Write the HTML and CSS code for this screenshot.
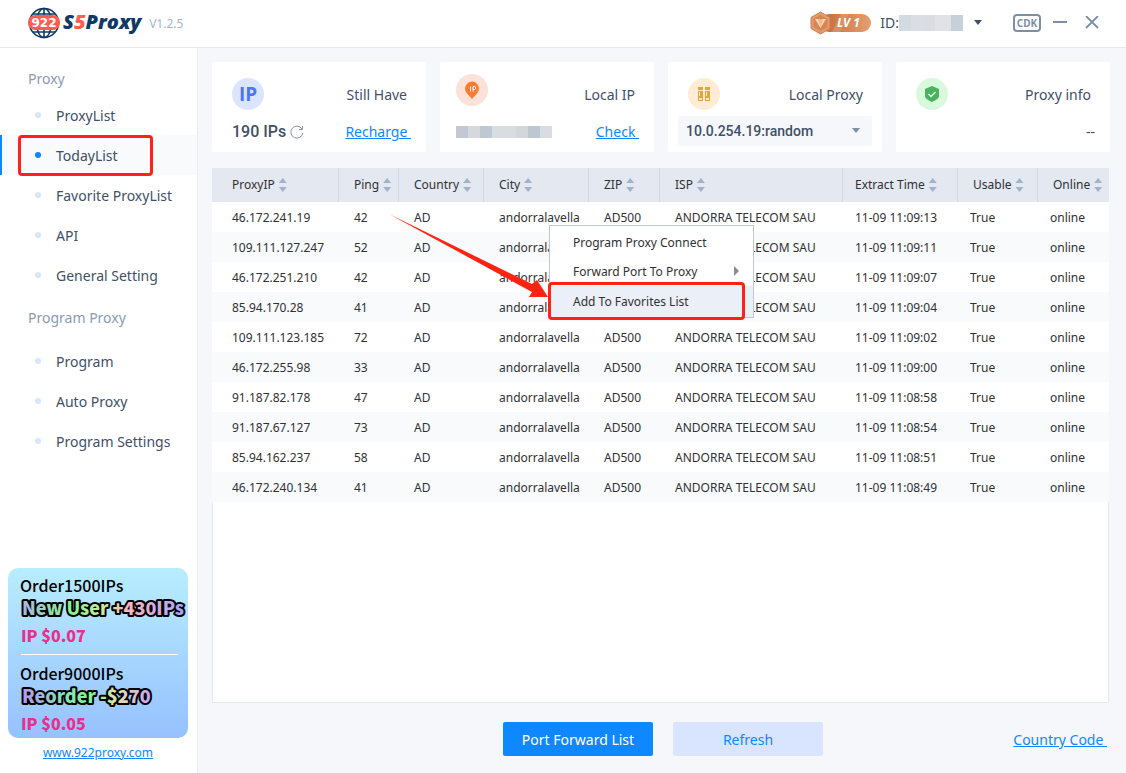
FILE: index.html
```html
<!DOCTYPE html>
<html lang="en">
<head>
  <meta charset="UTF-8" />
  <meta name="viewport" content="width=device-width, initial-scale=1.0" />
  <title>922 S5Proxy</title>
  <link rel="stylesheet" href="styles.css">
</head>
<body>
  <header class="topbar">
    <div class="brand">
      <svg class="globe" width="32" height="32" viewBox="0 0 32 32">
        <g fill="none" stroke="#0f3a66" stroke-width="1.6">
          <circle cx="16" cy="16" r="14.5" />
          <ellipse cx="16" cy="16" rx="7.5" ry="14.5" />
          <path d="M16 1.500v29M5 7h22M5 25h22" />
        </g>
        <rect x="0" y="8" width="32" height="15" rx="7" fill="#ff5d4f" />
        <text x="16" y="20" text-anchor="middle" class="globe-text">922</text>
      </svg>
      <h1 class="brand-name">S<span>5</span>Proxy</h1>
      <span class="version">V1.2.5</span>
    </div>
    <div class="account">
      <svg class="level" width="62" height="24" viewBox="0 0 62 24">
        <defs>
          <linearGradient id="lv" x1="0" x2="1">
            <stop offset="0" stop-color="#c06a3c" />
            <stop offset="1" stop-color="#e59f6e" />
          </linearGradient>
        </defs>
        <rect x="10" y="3" width="51" height="18" rx="9" fill="url(#lv)" />
        <path d="M31 3h8l-9 18h-8z" fill="#e0a37a" opacity=".5" />
        <path d="M10.500 1l9.500 5.500v11l-9.500 5.500-9.500-5.500v-11z" fill="#e39a6c" stroke="#cf7f51" />
        <path d="M10.500 4l7 4v8l-7 4-7-4v-8z" fill="#d58654" />
        <path d="M5 8h11l-5.500 9z" fill="#ffd9b5" />
        <path d="M8 8h5l-2.500 9z" fill="#f4b98a" />
        <text x="27" y="16" class="level-text">LV 1</text>
      </svg>
      <span class="user-id">ID:<i class="mask mask-id"></i></span>
      <button class="icon-btn caret-btn" aria-label="Account menu"><span class="caret"></span></button>
      <button class="cdk">CDK</button>
      <button class="icon-btn" aria-label="Minimize">
        <svg width="14" height="14" viewBox="0 0 14 14" stroke="#7c8fa6" stroke-width="2"><path d="M0 6h14" /></svg>
      </button>
      <button class="icon-btn close" aria-label="Close">
        <svg width="14" height="14" viewBox="0 0 14 14" stroke="#7c8fa6" stroke-width="1.8"><path d="M1 0l12 12M13 0L1 12" /></svg>
      </button>
    </div>
  </header>

  <div class="layout">
    <aside class="sidebar">
      <nav>
        <h2>Proxy</h2>
        <ul>
          <li><a href="#">ProxyList</a></li>
          <li class="active"><a href="#">TodayList</a><span class="mark"></span></li>
          <li><a href="#">Favorite ProxyList</a></li>
          <li><a href="#">API</a></li>
          <li><a href="#">General Setting</a></li>
        </ul>
        <h2>Program Proxy</h2>
        <ul>
          <li><a href="#">Program</a></li>
          <li><a href="#">Auto Proxy</a></li>
          <li><a href="#">Program Settings</a></li>
        </ul>
      </nav>
      <div class="promo-wrap">
        <div class="promo">
          <p class="order">Order1500IPs</p>
          <svg class="offer" width="166" height="26" viewBox="0 0 166 26">
            <defs>
              <linearGradient id="rainbow" x1="0" x2="1">
                <stop offset="0" stop-color="#a9b6e8" />
                <stop offset=".3" stop-color="#86f58c" />
                <stop offset=".5" stop-color="#c4ee9c" />
                <stop offset=".65" stop-color="#ffb3bd" />
                <stop offset="1" stop-color="#a8a4ff" />
              </linearGradient>
              <linearGradient id="rainbow2" x1="0" x2="1">
                <stop offset="0" stop-color="#b693f5" />
                <stop offset=".35" stop-color="#84e6b4" />
                <stop offset=".55" stop-color="#86f58c" />
                <stop offset=".75" stop-color="#e8dfae" />
                <stop offset="1" stop-color="#c9a0ff" />
              </linearGradient>
            </defs>
            <text x="2" y="20" fill="url(#rainbow)">New User +430IPs</text>
          </svg>
          <p class="price">IP $0.07</p>
          <hr>
          <p class="order">Order9000IPs</p>
          <svg class="offer" width="166" height="26" viewBox="0 0 166 26">
            <text x="2" y="20" fill="url(#rainbow2)">Reorder -$270</text>
          </svg>
          <p class="price">IP $0.05</p>
        </div>
        <a class="site" href="#">www.922proxy.com</a>
      </div>
    </aside>

    <main>
      <section class="cards">
        <div class="card">
          <div class="card-row">
            <svg width="32" height="32" viewBox="0 0 32 32">
              <circle cx="16" cy="16" r="16" fill="#dbe5ff" />
              <text x="16" y="23" text-anchor="middle" class="ip-text">IP</text>
            </svg>
            <h3>Still Have</h3>
          </div>
          <div class="card-row">
            <span class="count">190 IPs
              <button class="icon-btn" aria-label="Reload">
                <svg width="14" height="14" viewBox="0 0 14 14" fill="none" stroke="#8593a5"><path d="M12 4a6 6 0 1 0 .8 4M12.500 1v3.500H9" /></svg>
              </button>
            </span>
            <a href="#">Recharge&nbsp;</a>
          </div>
        </div>
        <div class="card card-local">
          <div class="card-row">
            <svg class="pin" width="32" height="32" viewBox="0 0 32 32">
              <circle cx="16" cy="16" r="16" fill="#fae2d8" />
              <path d="M16 25l-5-5.500a7 7 0 1 1 10 0z" fill="#ff7a33" />
              <path d="M14.500 12.500v5M17 17.500v-5h1.200a1.300 1.300 0 0 1 0 3H17" fill="none" stroke="#fff" />
            </svg>
            <h3>Local IP</h3>
          </div>
          <div class="card-row">
            <i class="mask mask-ip"></i>
            <a href="#">Check&nbsp;</a>
          </div>
        </div>
        <div class="card">
          <div class="card-row">
            <svg width="32" height="32" viewBox="0 0 32 32">
              <circle cx="16" cy="16" r="16" fill="#ffecd2" />
              <path d="M10 9h5v3h-5zM17 9h5v3h-5zM10 13h5v10h-5zM17 13h5v10h-5z" fill="#e2a73c" />
              <path d="M11 14h1v4h-1zM18 14h1v4h-1zM11 20h3v2h-3zM18 20h3v2h-3z" fill="#ffecd2" />
            </svg>
            <h3>Local Proxy</h3>
          </div>
          <div class="select">
            <select aria-label="Local proxy">
              <option>10.0.254.19:random</option>
            </select>
          </div>
        </div>
        <div class="card">
          <div class="card-row">
            <svg width="32" height="32" viewBox="0 0 32 32">
              <circle cx="16" cy="16" r="16" fill="#d9f9dc" />
              <path d="M16 8l7 3v7c0 3-4 4.500-7 6-3-1.500-7-3-7-6v-7z" fill="#4bb25f" />
              <path d="M12.500 16l2.500 2.500 4.500-4.500" fill="none" stroke="#e9fbe9" stroke-width="1.400" />
            </svg>
            <h3>Proxy info</h3>
          </div>
          <div class="card-row none">--</div>
        </div>
      </section>

      <section class="list">
        <table>
          <colgroup>
            <col class="c-ip"><col class="c-ping"><col class="c-country"><col class="c-city"><col class="c-zip"><col class="c-isp"><col class="c-time"><col class="c-usable"><col class="c-online">
          </colgroup>
          <thead>
            <tr>
              <th><button>ProxyIP</button></th>
              <th><button>Ping</button></th>
              <th><button>Country</button></th>
              <th><button>City</button></th>
              <th><button>ZIP</button></th>
              <th><button>ISP</button></th>
              <th><button>Extract Time</button></th>
              <th><button>Usable</button></th>
              <th><button>Online</button></th>
            </tr>
          </thead>
          <tbody>
            <tr><td>46.172.241.19</td><td>42</td><td>AD</td><td>andorralavella</td><td>AD500</td><td>ANDORRA TELECOM SAU</td><td>11-09 11:09:13</td><td>True</td><td>online</td></tr>
            <tr><td>109.111.127.247</td><td>52</td><td>AD</td><td>andorralavella</td><td>AD500</td><td>ANDORRA TELECOM SAU</td><td>11-09 11:09:11</td><td>True</td><td>online</td></tr>
            <tr><td>46.172.251.210</td><td>42</td><td>AD</td><td>andorralavella</td><td>AD500</td><td>ANDORRA TELECOM SAU</td><td>11-09 11:09:07</td><td>True</td><td>online</td></tr>
            <tr><td>85.94.170.28</td><td>41</td><td>AD</td><td>andorralavella</td><td>AD500</td><td>ANDORRA TELECOM SAU</td><td>11-09 11:09:04</td><td>True</td><td>online</td></tr>
            <tr><td>109.111.123.185</td><td>72</td><td>AD</td><td>andorralavella</td><td>AD500</td><td>ANDORRA TELECOM SAU</td><td>11-09 11:09:02</td><td>True</td><td>online</td></tr>
            <tr><td>46.172.255.98</td><td>33</td><td>AD</td><td>andorralavella</td><td>AD500</td><td>ANDORRA TELECOM SAU</td><td>11-09 11:09:00</td><td>True</td><td>online</td></tr>
            <tr><td>91.187.82.178</td><td>47</td><td>AD</td><td>andorralavella</td><td>AD500</td><td>ANDORRA TELECOM SAU</td><td>11-09 11:08:58</td><td>True</td><td>online</td></tr>
            <tr><td>91.187.67.127</td><td>73</td><td>AD</td><td>andorralavella</td><td>AD500</td><td>ANDORRA TELECOM SAU</td><td>11-09 11:08:54</td><td>True</td><td>online</td></tr>
            <tr><td>85.94.162.237</td><td>58</td><td>AD</td><td>andorralavella</td><td>AD500</td><td>ANDORRA TELECOM SAU</td><td>11-09 11:08:51</td><td>True</td><td>online</td></tr>
            <tr><td>46.172.240.134</td><td>41</td><td>AD</td><td>andorralavella</td><td>AD500</td><td>ANDORRA TELECOM SAU</td><td>11-09 11:08:49</td><td>True</td><td>online</td></tr>
          </tbody>
        </table>

        <div class="menu">
          <button>Program Proxy Connect</button>
          <button class="sub">Forward Port To Proxy</button>
          <button class="selected">Add To Favorites List</button>
          <span class="mark"></span>
        </div>
        <svg class="arrow" width="160" height="86" viewBox="0 0 160 86">
          <path d="M0 0l143 70 5-4 11 17-19 0 3-5z" fill="#ff2312" />
        </svg>
      </section>

      <footer class="actions">
        <button class="btn primary">Port Forward List</button>
        <button class="btn">Refresh</button>
        <a href="#">Country Code&nbsp;</a>
      </footer>
    </main>
  </div>
</body>
</html>
```
FILE: styles.css
```css
* {
  box-sizing: border-box;
}

body {
  margin: 0;
  min-height: 100vh;
  display: flex;
  flex-direction: column;
  font-family: "Noto Sans", "Open Sans", sans-serif;
  font-size: 14px;
  line-height: 20px;
  color: #3f5068;
  background-color: #f6f7fb;
}

h1, h2, h3, p, ul {
  margin: 0;
  padding: 0;
  font-weight: normal;
}

ul {
  list-style: none;
}

button, select {
  font: inherit;
  color: inherit;
  border: none;
  background: none;
  padding: 0;
  cursor: pointer;
}

a {
  color: #0f87ff;
}

svg {
  display: block;
}

/* top bar */
.topbar {
  height: 48px;
  padding: 0 27px 2px 28px;
  display: flex;
  justify-content: space-between;
  align-items: center;
  background-color: white;
  border-bottom: 1px solid #e6e9f1;
}

.brand, .account {
  display: flex;
  align-items: center;
  height: 44px;
}

.globe-text {
  font: bold 12px "DejaVu Sans", sans-serif;
  fill: white;
}

.brand-name {
  margin-left: 3px;
  padding-bottom: 2px;
  font: italic 900 20px/28px "Open Sans", sans-serif;
  color: #0f3a66;
}

.brand-name span {
  color: #ff5d4f;
}

.version {
  margin-left: 8px;
  padding-top: 2px;
  font-size: 12px;
  color: #a3b6ca;
}

.level-text {
  font: italic bold 12px "Noto Sans", sans-serif;
  fill: white;
}

.user-id {
  display: flex;
  align-items: center;
  margin-left: 8px;
}

.mask {
  display: block;
}

.mask-id {
  width: 65px;
  height: 16px;
  background: linear-gradient(to right, #d3dae1 12px, #dadde2 12px 24px, #d9dde1 24px 36px, #e0e2e6 36px 52px, #c7cfd9 52px 64px, #fff 64px);
}

.icon-btn {
  display: inline-block;
}

.caret-btn {
  margin: 0 31px 0 10px;
}

.caret {
  display: block;
  border: 4px solid transparent;
  border-top: 5px solid #3f5068;
  border-bottom: 0;
}

.cdk {
  width: 28px;
  height: 18px;
  margin-right: 12px;
  border: 2px solid #7c8fa6;
  border-radius: 4px;
  font-size: 10px;
  font-weight: bold;
  line-height: 14px;
  color: #7c8fa6;
}

.close {
  margin-left: 18px;
}

/* sidebar */
.layout {
  flex: 1;
  display: flex;
}

.sidebar {
  width: 198px;
  flex: none;
  display: flex;
  flex-direction: column;
  justify-content: space-between;
  background-color: white;
  border-right: 1px solid #e9ecf3;
}

.sidebar h2 {
  padding: 21px 28px 6px;
  font-size: 14px;
  color: #8a9bb0;
}

.sidebar ul + h2 {
  padding: 13px 28px 13px;
}

.sidebar li {
  position: relative;
}

.sidebar li a {
  display: flex;
  align-items: center;
  height: 40px;
  padding: 2px 0 0 35px;
  color: #3f5068;
  text-decoration: none;
}

.sidebar li a::before {
  content: "";
  width: 6px;
  height: 6px;
  margin: 0 15px 2px 0;
  border-radius: 50%;
  background-color: #d9e5ff;
}

.sidebar .active {
  background-color: #f8fafc;
  border-left: 2px solid #0f87ff;
}

.sidebar .active a {
  padding-left: 33px;
}

.sidebar .active a::before {
  background-color: #0f87ff;
}

.mark {
  position: absolute;
  border: 3px solid #ff2312;
  border-radius: 4px;
  pointer-events: none;
}

.sidebar .mark {
  left: 16px;
  right: 44px;
  top: 0;
  bottom: -1px;
}

.promo-wrap {
  padding: 0 9px 10px 8px;
  text-align: center;
}

.promo {
  height: 170px;
  padding: 7px 10px 0 12px;
  border-radius: 10px;
  background: linear-gradient(#b8edff, #96c1ff);
  text-align: left;
}

.order {
  font: 500 16px/20px "Noto Sans CJK SC", "Noto Sans", sans-serif;
  color: black;
}

.offer {
  overflow: visible;
}

.offer text {
  font: 900 18px "Noto Sans CJK SC", "Noto Sans", sans-serif;
  stroke: black;
  stroke-width: 4px;
  stroke-linejoin: round;
  paint-order: stroke;
}

.price {
  padding-left: 1px;
  font: 900 16px/28px "Noto Sans CJK SC", "Noto Sans", sans-serif;
  color: #ec2f8c;
}

.promo hr {
  margin: 5px 0 8px 1px;
  border: none;
  border-top: 1px solid white;
}

.site {
  display: block;
  margin-top: 5px;
  font-size: 12px;
}

/* main */
main {
  flex: 1;
  min-width: 0;
  display: flex;
  flex-direction: column;
  padding: 14px 16px 17px 14px;
}

.cards {
  display: grid;
  grid-template-columns: repeat(4, 1fr);
  gap: 14px;
}

.card {
  height: 90px;
  padding: 16px 10px 0 20px;
  background-color: white;
  border-radius: 2px;
}

.card-row {
  display: flex;
  justify-content: space-between;
  align-items: center;
  padding-right: 5px;
}

.card-row + .card-row {
  height: 42px;
  padding-top: 2px;
}

.card h3 {
  padding: 2px 4px 0 0;
  font-size: 14px;
}

.card-local {
  padding-left: 16px;
}

.pin {
  margin: -4px 0 4px;
}

.card-local .card-row:first-child {
  height: 32px;
}

.ip-text {
  font: bold 19px "Open Sans", sans-serif;
  fill: #4a76f5;
}

.count {
  display: flex;
  align-items: center;
  gap: 4px;
  font: 500 16px/20px Roboto, sans-serif;
}

.card .none {
  justify-content: flex-end;
}

.select {
  position: relative;
  margin: 6px 0 0 -10px;
}

.select select {
  appearance: none;
  width: 100%;
  height: 30px;
  padding: 0 24px 0 8px;
  border-radius: 2px;
  background-color: #f5f7fb;
  font: 500 14px/20px Roboto, sans-serif;
}

.select::after {
  content: "";
  position: absolute;
  right: 12px;
  top: 12px;
  border: 4px solid transparent;
  border-top: 5px solid #7c8fa6;
  border-bottom: 0;
  pointer-events: none;
}

.mask-ip {
  width: 96px;
  height: 12px;
  background: linear-gradient(to right, #c3c9d3 12px, #d6d8dc 12px 24px, #bfc7d2 24px 36px, #d9dce1 36px 60px, #d3d7dc 60px 72px, #bec6d1 72px 84px, #d9dce1 84px);
}

/* table */
.list {
  position: relative;
  flex: 1;
  margin: 16px 1px 0 0;
  border: 1px solid #e6e9f1;
  border-top: none;
  background-color: white;
}

table {
  width: calc(100% + 2px);
  margin: 0 -1px;
  table-layout: fixed;
  border-collapse: separate;
  border-spacing: 0;
  font-size: 12px;
  color: #303133;
}

.c-ip { width: 127px; }
.c-ping { width: 60px; }
.c-country { width: 85px; }
.c-city { width: 105px; }
.c-zip { width: 71px; }
.c-time { width: 115px; }
.c-usable { width: 80px; }
.c-online { width: 71px; }

th, td {
  padding: 0 0 0 15px;
  text-align: left;
  font-weight: normal;
  white-space: nowrap;
}

th:first-child, td:first-child {
  padding-left: 20px;
}

th {
  height: 34px;
  background-color: #e3e8f1;
  border-right: 1px solid #d3d9e4;
}

th:last-child {
  border-right: none;
}

td {
  height: 30px;
  padding-top: 2px;
}

td:nth-child(n+7), th:nth-child(7) {
  padding-left: 12px;
}

tbody tr {
  background-color: white;
}

tbody tr:nth-child(even) {
  background-color: #f8fafc;
}

th button {
  display: flex;
  align-items: center;
}

th button::after {
  content: "";
  width: 8px;
  height: 14px;
  margin-left: 4px;
  background-color: #9fb4cb;
  clip-path: polygon(50% 0, 100% 5px, 100% 5px, 0 5px, 0 9px, 100% 9px, 50% 100%, 0 9px, 0 5px);
}

/* context menu */
.menu {
  position: absolute;
  left: 336px;
  top: 57px;
  width: 205px;
  padding: 2px 0 0;
  border: 1px solid #c3c8d0;
  background-color: white;
  font-size: 12px;
  color: #303133;
}

.menu button {
  position: relative;
  display: block;
  width: 100%;
  height: 29px;
  padding-left: 23px;
  text-align: left;
}

.menu .selected {
  height: 31px;
  background-color: #ebeff7;
}

.menu .sub::after {
  content: "";
  position: absolute;
  right: 14px;
  top: 9px;
  border: 5px solid transparent;
  border-left-color: #7c8fa6;
  border-right: 0;
}

.menu .mark {
  left: -2px;
  right: 8px;
  top: 56px;
  bottom: -3px;
}

.arrow {
  position: absolute;
  left: 176px;
  top: 46px;
}

/* footer */
.actions {
  position: relative;
  display: flex;
  justify-content: center;
  gap: 20px;
  padding: 19px 0 0 4px;
}

.btn {
  width: 150px;
  height: 34px;
  padding-top: 1px;
  border-radius: 2px;
  background-color: #d9e5ff;
  color: #0f87ff;
}

.primary {
  background-color: #0f87ff;
  color: white;
}

.actions a {
  position: absolute;
  right: 3px;
  bottom: 6px;
}
```
